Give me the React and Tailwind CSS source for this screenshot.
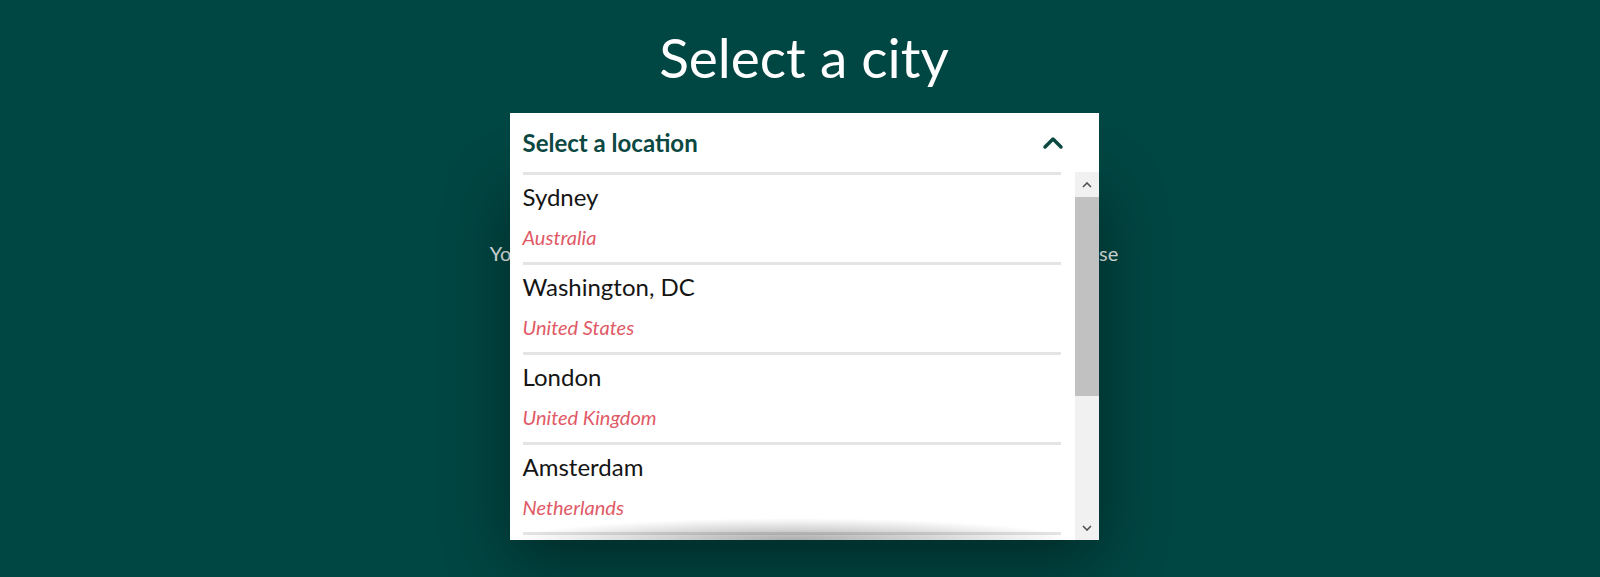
import { ChevronUp } from 'lucide-react'

const cities = [
  { name: 'Sydney', country: 'Australia' },
  { name: 'Washington, DC', country: 'United States' },
  { name: 'London', country: 'United Kingdom' },
  { name: 'Amsterdam', country: 'Netherlands' },
  { name: 'Paris', country: 'France' },
]

function Scrollbar() {
  return (
    <div className="w-[24px] h-full bg-[#f1f1f1] flex flex-col shrink-0">
      <div className="h-[25px] flex items-center justify-center text-[#505050]">
        <svg width="10" height="6" viewBox="0 0 10 6" fill="none">
          <path d="M1 5 L5 1 L9 5" stroke="currentColor" strokeWidth="1.6" />
        </svg>
      </div>
      <div className="h-[199px] bg-[#c1c1c1]" />
      <div className="flex-1" />
      <div className="h-[25px] flex items-center justify-center text-[#505050]">
        <svg width="10" height="6" viewBox="0 0 10 6" fill="none">
          <path d="M1 1 L5 5 L9 1" stroke="currentColor" strokeWidth="1.6" />
        </svg>
      </div>
    </div>
  )
}

export default function App() {
  return (
    <div className="min-h-[577px] w-full bg-[#004642] overflow-hidden pl-2" style={{ fontFamily: 'Lato, "Open Sans", sans-serif' }}>
      <div className="flex flex-col items-center">
        <h1 className="pt-[22px] text-[55px] leading-[70px] text-white font-normal h-[113px]">Select a city</h1>

        <div className="relative w-[589px]">
          <div className="relative z-20 bg-white h-[59px] flex items-center justify-between pl-[13px] pr-[30px]">
            <span className="text-[24px] font-bold text-[#0c4842]">Select a location</span>
            <ChevronUp size={32} strokeWidth={2.6} className="text-[#0c4842]" />
          </div>

          <div className="absolute top-full left-0 w-full h-[368px] bg-white flex shadow-[0_20px_60px_rgba(0,0,0,0.4)] z-10">
            <div className="relative flex-1 overflow-hidden pl-[13px] pr-[14px]">
              {cities.map((c) => (
                <div key={c.name} className="border-t-[3px] border-[#e4e4e4] pt-[8px] pb-[13px]">
                  <div className="text-[24px] leading-[28px] text-[#151515]">{c.name}</div>
                  <div className="mt-[14px] text-[20px] leading-[24px] italic text-[#df5a66]">{c.country}</div>
                </div>
              ))}
              <div className="absolute bottom-0 left-0 right-0 h-[22px] bg-[radial-gradient(ellipse_at_bottom,rgba(0,0,0,0.32),rgba(0,0,0,0)_70%)]" />
            </div>
            <Scrollbar />
          </div>
        </div>

        <p className="mt-[67px] text-[20px] leading-[28px] text-[#e6eeec] whitespace-nowrap">
          Your location helps us to show you the nearest events, so please choose
        </p>
      </div>
    </div>
  )
}
